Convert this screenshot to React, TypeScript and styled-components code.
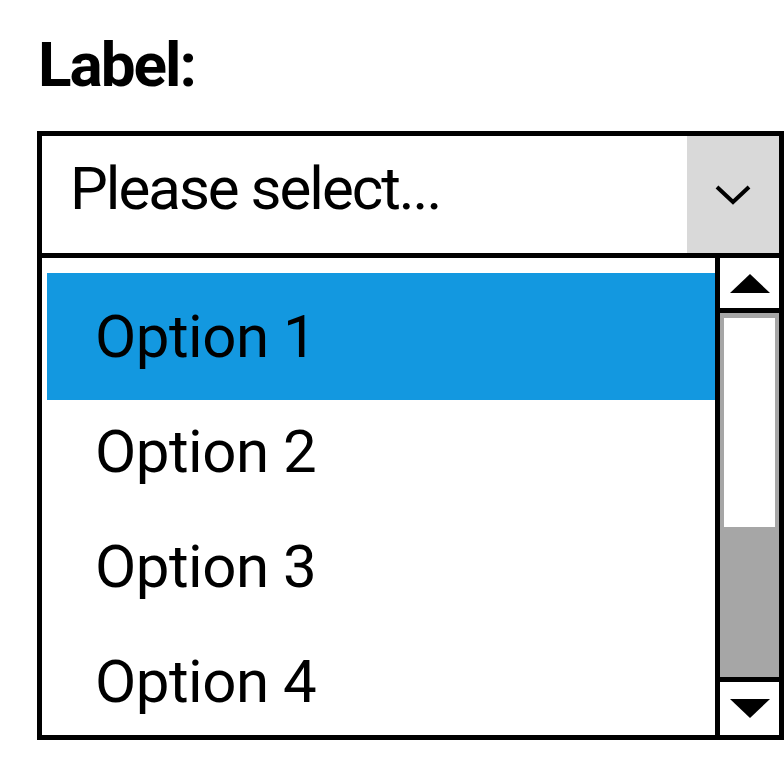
import React from 'react';
import styled, { createGlobalStyle } from 'styled-components';

const GlobalStyle = createGlobalStyle`
  html, body {
    margin: 0;
    padding: 0;
    background: #fff;
  }
  body {
    font-family: Roboto, "Liberation Sans", sans-serif;
    color: #000;
  }
`;

const Page = styled.div`
  padding: 34px 0 0 37px;
`;

const Label = styled.label`
  display: block;
  margin: 0 0 35px 1px;
  font-size: 62px;
  line-height: 62px;
  font-weight: 700;
  letter-spacing: -2px;
`;

const Field = styled.div`
  width: 747px;
`;

const SelectBox = styled.div`
  display: flex;
  box-sizing: border-box;
  height: 127px;
  border: 5px solid #000;
`;

const SelectValue = styled.div`
  flex: 1;
  display: flex;
  align-items: center;
  padding: 0 0 12px 28px;
  font-size: 60px;
  line-height: 1;
  letter-spacing: -2px;
`;

const ArrowBox = styled.div`
  width: 92px;
  display: flex;
  align-items: center;
  justify-content: center;
  background: #d9d9d9;
`;

const ListBox = styled.div`
  display: flex;
  box-sizing: border-box;
  height: 482px;
  border: 5px solid #000;
  border-top: 0;
`;

const OptionList = styled.ul`
  flex: 1;
  margin: 0;
  padding: 21px 0 0 5px;
  list-style: none;
  overflow: hidden;
`;

const Option = styled.li<{ selected?: boolean }>`
  height: 115px;
  display: flex;
  align-items: center;
  padding-left: 48px;
  font-size: 60px;
  line-height: 1;
  letter-spacing: -0.5px;
  background: ${p => (p.selected ? '#1398e0' : 'transparent')};
  box-shadow: ${p => (p.selected ? '0 -6px 0 #1398e0, 0 6px 0 #1398e0' : 'none')};
`;

const ScrollBar = styled.div`
  width: 64px;
  box-sizing: border-box;
  border-left: 5px solid #000;
  display: flex;
  flex-direction: column;
`;

const ScrollButton = styled.div<{ down?: boolean }>`
  height: ${p => (p.down ? '53px' : '50px')};
  display: flex;
  align-items: center;
  justify-content: center;
  background: #fff;
  border-top: ${p => (p.down ? '5px solid #000' : '0')};
  border-bottom: ${p => (p.down ? '0' : '5px solid #000')};
`;

const Track = styled.div`
  flex: 1;
  background: #a6a6a6;
  padding: 5px 4px 0;
`;

const Thumb = styled.div`
  height: 209px;
  background: #fff;
`;

const options = ['Option 1', 'Option 2', 'Option 3', 'Option 4'];

export default function App() {
  return (
    <>
      <GlobalStyle />
      <Page>
        <Label>Label:</Label>
        <Field>
          <SelectBox>
            <SelectValue>Please select...</SelectValue>
            <ArrowBox>
              <svg width="36" height="20" viewBox="0 0 36 20">
                <polyline points="2,2 18,17 34,2" fill="none" stroke="#000" strokeWidth="4" />
              </svg>
            </ArrowBox>
          </SelectBox>
          <ListBox>
            <OptionList>
              {options.map((o, i) => (
                <Option key={o} selected={i === 0}>
                  {o}
                </Option>
              ))}
            </OptionList>
            <ScrollBar>
              <ScrollButton>
                <svg width="40" height="19" viewBox="0 0 40 19">
                  <polygon points="0,19 20,0 40,19" fill="#000" />
                </svg>
              </ScrollButton>
              <Track>
                <Thumb />
              </Track>
              <ScrollButton down>
                <svg width="40" height="19" viewBox="0 0 40 19">
                  <polygon points="0,0 40,0 20,19" fill="#000" />
                </svg>
              </ScrollButton>
            </ScrollBar>
          </ListBox>
        </Field>
      </Page>
    </>
  );
}
